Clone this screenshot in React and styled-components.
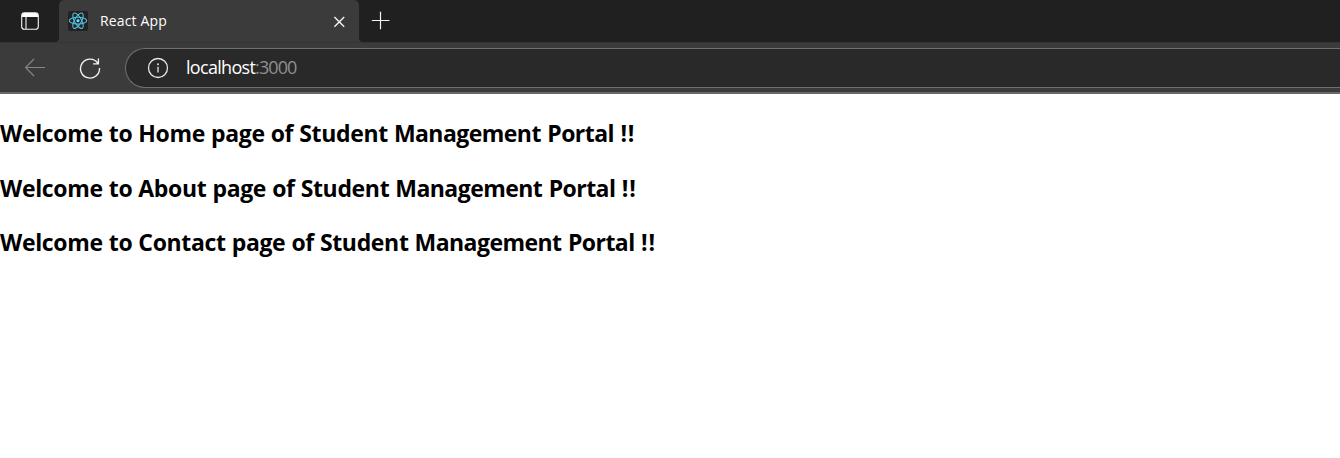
import React from "react";
import styled, { createGlobalStyle } from "styled-components";

const GlobalStyle = createGlobalStyle`
  * { box-sizing: border-box; }
  body { margin: 0; background: #fff; font-family: "Open Sans", "Noto Sans", sans-serif; }
`;

const Window = styled.div`
  height: 458px;
  overflow: hidden;
`;

const TabStrip = styled.header`
  display: flex;
  height: 42px;
  background: #202020;
`;

const StripButton = styled.div`
  display: flex;
  align-items: center;
  justify-content: center;
  width: ${(p) => p.$width}px;
  background: #202020;
  border-radius: ${(p) => p.$corner};
`;

const StripBase = styled.div`
  flex: ${(p) => (p.$grow ? "1" : "none")};
  display: flex;
  background: #3b3b3b;
`;

const StripFill = styled.div`
  flex: 1;
  background: #202020;
`;

const Tab = styled.div`
  display: flex;
  align-items: center;
  width: 300px;
  padding: 0 13px 0 9px;
  background: #3b3b3b;
  border-radius: 5px 5px 0 0;
`;

const Favicon = styled.svg`
  width: 20px;
  height: 20px;
  background: #222;
  border-radius: 2px;
`;

const TabTitle = styled.span`
  flex: 1;
  margin-left: 12px;
  color: #fff;
  font-size: 14px;
  line-height: 20px;
  letter-spacing: 0.15px;
`;

const Toolbar = styled.nav`
  display: flex;
  align-items: center;
  height: 52px;
  padding-left: 24px;
  background: #3b3b3b;
  border-top: 1px solid #343434;
  border-bottom: 2px solid #686868;
`;

const ToolIcon = styled.svg`
  flex: none;
  width: 22px;
  height: 22px;
  margin-right: ${(p) => p.$gap}px;
`;

const AddressBar = styled.div`
  flex: 1;
  display: flex;
  align-items: center;
  height: 40px;
  padding-left: 21px;
  background: #292929;
  border: 1px solid #707070;
  border-right: 0;
  border-radius: 20px 0 0 20px;
`;

const Url = styled.span`
  margin-top: -2px;
  color: #fff;
  font-size: 18px;
  line-height: 24px;
  letter-spacing: -0.7px;
`;

const Port = styled.span`
  color: #8f8f8f;
  letter-spacing: -0.9px;
`;

const Page = styled.main`
  padding-top: 23px;
`;

const Heading = styled.h2`
  margin: 0 0 22.5px;
  color: #000;
  font-size: 23px;
  font-weight: 700;
  line-height: 32px;
  letter-spacing: -0.34px;
  word-spacing: 0.4px;
  white-space: nowrap;
`;

const Tracked = styled.span`
  letter-spacing: ${(p) => p.$by}px;
  word-spacing: 1px;
`;

const HEADINGS = ["Home", "About", "Contact"];

export default function App() {
  return (
    <Window>
      <GlobalStyle />
      <TabStrip>
        <StripBase>
          <StripButton $width={59} $corner="0 0 4px 0">
            <svg width="20" height="20" viewBox="0 0 20 20" fill="none">
              <rect x="1.7" y="1.7" width="16.6" height="16.6" rx="2.8" stroke="#f5f5f5" strokeWidth="1.1" />
              <path d="M2 6V4.5A2.5 2.5 0 0 1 4.5 2h11A2.5 2.5 0 0 1 18 4.5V6Z" fill="#fff" />
              <path d="M6 6v12" stroke="#f5f5f5" strokeWidth="1.1" />
            </svg>
          </StripButton>
        </StripBase>
        <Tab>
          <Favicon viewBox="0 0 20 20" fill="none">
            <g stroke="#53bfdc" strokeWidth="1.1">
              <ellipse cx="10" cy="9.7" rx="8.7" ry="3.4" />
              <ellipse cx="10" cy="9.7" rx="8.7" ry="3.4" transform="rotate(60 10 9.7)" />
              <ellipse cx="10" cy="9.7" rx="8.7" ry="3.4" transform="rotate(120 10 9.7)" />
            </g>
            <circle cx="10" cy="9.7" r="1.6" fill="#61dafb" />
          </Favicon>
          <TabTitle>React App</TabTitle>
          <svg width="14" height="14" viewBox="0 0 14 14" stroke="#f3f3f3" strokeWidth="1.4">
            <path d="M2.4 3L12.2 12.8M12.2 3L2.4 12.8" />
          </svg>
        </Tab>
        <StripBase $grow>
          <StripButton $width={43} $corner="0 0 0 4px">
            <svg width="20" height="20" viewBox="0 0 20 20" stroke="#f5f5f5" strokeWidth="1.2">
              <path d="M.8 9.5h17.6M9.5 .7v17.6" />
            </svg>
          </StripButton>
          <StripFill />
        </StripBase>
      </TabStrip>
      <Toolbar>
        <ToolIcon $gap={33} viewBox="0 0 22 22" fill="none" stroke="#858585" strokeWidth="1.2">
          <path d="M21 10.5H1.6M10 2L1.6 10.5l8.4 8.5" />
        </ToolIcon>
        <ToolIcon $gap={24} viewBox="0 0 22 22" fill="none" stroke="#f5f5f5" strokeWidth="1.35">
          <path d="M18.9 6.3A9.5 9.5 0 1 0 20.5 11M19.4 1.5v5.3h-5.3" />
        </ToolIcon>
        <AddressBar>
          <ToolIcon $gap={17} viewBox="0 0 22 22" fill="none" stroke="#e6e6e6" strokeWidth="1.3">
            <circle cx="11" cy="11" r="9.5" />
            <path d="M11 9.7v5.8" />
            <circle cx="11" cy="7.2" r=".95" fill="#e6e6e6" stroke="none" />
          </ToolIcon>
          <Url>
            localhost<Port>:3000</Port>
          </Url>
        </AddressBar>
      </Toolbar>
      <Page>
        {HEADINGS.map((name) => (
          <Heading key={name}>
            Welcome to {name} page of Student <Tracked $by={-0.55}>Management Portal </Tracked>
            <Tracked $by={0.8}>!!</Tracked>
          </Heading>
        ))}
      </Page>
    </Window>
  );
}
